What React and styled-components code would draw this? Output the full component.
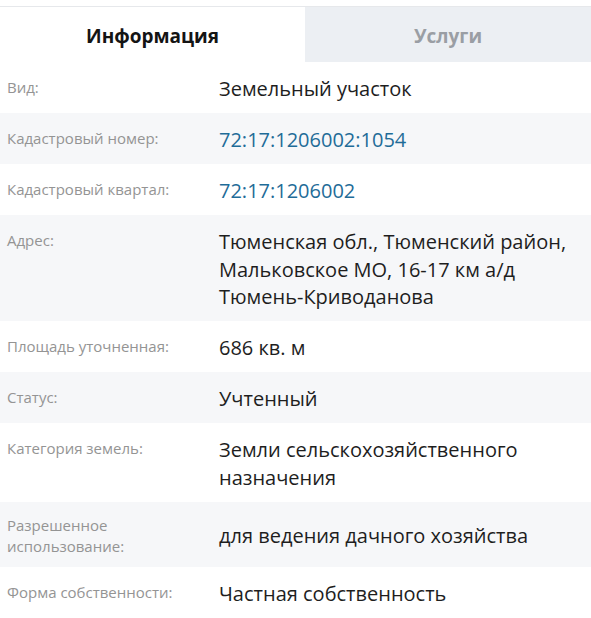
import React from "react";
import styled, { createGlobalStyle } from "styled-components";

const Global = createGlobalStyle`
  body {
    margin: 0;
    background: #fff;
    font-family: "Open Sans", "Noto Sans", sans-serif;
  }
`;

const Wrapper = styled.div`
  width: 591px;
  padding-top: 6px;
`;

const Tabs = styled.div`
  display: flex;
  border-top: 1px solid #e6e8eb;
  height: 55px;
`;

const Tab = styled.div`
  flex: ${(p) => (p.active ? "0 0 305px" : "1")};
  display: flex;
  align-items: center;
  justify-content: center;
  padding-top: 2px;
  font-size: 19px;
  font-weight: 700;
  color: ${(p) => (p.active ? "#141414" : "#9a9ea4")};
  background: ${(p) => (p.active ? "#fff" : "#eceff3")};
`;

const Row = styled.div`
  display: grid;
  grid-template-columns: 219px 1fr;
  align-items: ${(p) => (p.center ? "center" : "start")};
  padding: 13px 0 10.5px;
  background: ${(p) => (p.striped ? "#f6f7f9" : "#fff")};
`;

const Label = styled.div`
  padding-left: 7px;
  padding-top: ${(p) => (p.center ? "0" : "2px")};
  font-size: 15px;
  line-height: 21px;
  color: #949494;
`;

const Value = styled.div`
  font-size: 20px;
  line-height: 27.5px;
  color: ${(p) => (p.link ? "#1f6c98" : "#1e1e1e")};
  padding-right: 10px;
`;

const rows = [
  { label: "Вид:", value: "Земельный участок" },
  { label: "Кадастровый номер:", value: "72:17:1206002:1054", link: true },
  { label: "Кадастровый квартал:", value: "72:17:1206002", link: true },
  {
    label: "Адрес:",
    value: (
      <>
        Тюменская обл., Тюменский район,
        <br />
        Мальковское МО, 16-17 км а/д
        <br />
        Тюмень-Криводанова
      </>
    ),
  },
  { label: "Площадь уточненная:", value: "686 кв. м" },
  { label: "Статус:", value: "Учтенный" },
  {
    label: "Категория земель:",
    value: (
      <>
        Земли сельскохозяйственного
        <br />
        назначения
      </>
    ),
  },
  {
    label: (
      <>
        Разрешенное
        <br />
        использование:
      </>
    ),
    value: "для ведения дачного хозяйства",
    center: true,
  },
  { label: "Форма собственности:", value: "Частная собственность" },
];

export default function App() {
  return (
    <Wrapper>
      <Global />
      <Tabs>
        <Tab active>Информация</Tab>
        <Tab>Услуги</Tab>
      </Tabs>
      {rows.map((r, i) => (
        <Row key={i} striped={i % 2 === 1} center={r.center}>
          <Label center={r.center}>{r.label}</Label>
          <Value link={r.link}>{r.value}</Value>
        </Row>
      ))}
    </Wrapper>
  );
}
